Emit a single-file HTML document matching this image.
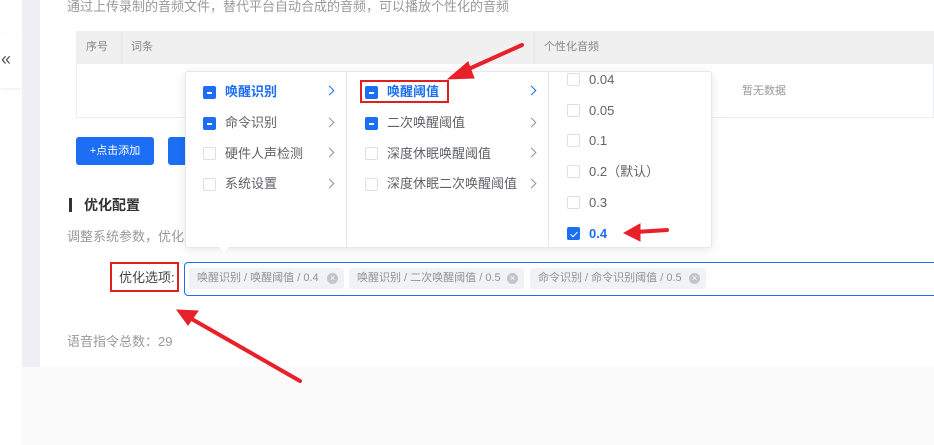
<!DOCTYPE html>
<html><head><meta charset="utf-8"><style>
*{margin:0;padding:0;box-sizing:border-box}
body{width:934px;height:445px;overflow:hidden;position:relative;background:#fff;font-family:"Liberation Sans","Noto Sans CJK SC",sans-serif;font-size:13px;color:#606266}
.a{position:absolute;white-space:nowrap;line-height:19px}
.cb{position:absolute;width:13px;height:13px;border:1px solid #dcdfe6;border-radius:2px;background:#fff}
.cb.m{background:#1c6ef5;border-color:#1c6ef5}
.cb.m:after{content:"";position:absolute;left:3px;top:5px;width:5px;height:1.5px;background:#fff}
.cb.c{background:#1c6ef5;border-color:#1c6ef5}
.cb.c:after{content:"";position:absolute;left:3.5px;top:1.5px;width:3px;height:6px;border-right:1.5px solid #fff;border-bottom:1.5px solid #fff;transform:rotate(45deg)}
.ar{position:absolute;width:7px;height:7px;border-right:1px solid #909399;border-top:1px solid #909399;transform:rotate(45deg)}
.tag{position:absolute;top:268px;height:21px;background:#f0f2f5;border-radius:3px;font-size:11px;color:#909399;line-height:21px;padding-left:8px}
.x{position:absolute;right:6px;top:5px;width:11px;height:11px;border-radius:50%;background:#c0c4cc;color:#fff;font-size:9px;line-height:11px;text-align:center}
</style></head><body>
<div class="a" style="left:0;top:0;width:22px;height:445px;background:#fff"></div>
<div class="a" style="left:0;top:33px;width:22px;height:55px;box-shadow:0 1px 3px rgba(0,0,0,.08);background:#fff"></div>
<div class="a" style="left:1px;top:50px;font-size:18px;color:#555">«</div>
<div class="a" style="left:22px;top:0;width:18px;height:367px;background:#eef0f5"></div>
<div class="a" style="left:22px;top:367px;width:912px;height:78px;background:#fafafa"></div>
<div class="a" style="left:67px;top:-3px;color:#999;font-size:13px">通过上传录制的音频文件，替代平台自动合成的音频，可以播放个性化的音频</div>
<div class="a" style="left:76px;top:31px;width:858px;height:87px;border:1px solid #ebeef5"></div>
<div class="a" style="left:76px;top:31px;width:858px;height:33px;background:#f0f0f0"></div>
<div class="a" style="left:121px;top:31px;width:1px;height:33px;background:#e4e4e4"></div>
<div class="a" style="left:534px;top:31px;width:1px;height:33px;background:#e4e4e4"></div>
<div class="a" style="left:86px;top:38px;font-size:11px;color:#888">序号</div>
<div class="a" style="left:131px;top:38px;font-size:11px;color:#888">词条</div>
<div class="a" style="left:544px;top:38px;font-size:11px;color:#888">个性化音频</div>
<div class="a" style="left:742px;top:82px;font-size:11px;color:#999">暂无数据</div>
<div class="a" style="left:76px;top:137px;width:78px;height:28px;background:#1c6ef5;border-radius:3px;color:#fff;font-size:11px;line-height:28px;text-align:center">+点击添加</div>
<div class="a" style="left:168px;top:137px;width:30px;height:28px;background:#1c6ef5;border-radius:3px"></div>
<div class="a" style="left:69px;top:198px;width:3px;height:14px;background:#333"></div>
<div class="a" style="left:84px;top:196px;font-size:14px;font-weight:bold;color:#333">优化配置</div>
<div class="a" style="left:67px;top:227px;color:#999">调整系统参数，优化系统</div>
<div class="a" style="left:110px;top:262px;width:69px;height:30px;border:2px solid #e02020"></div>
<div class="a" style="left:119px;top:268px;color:#444">优化选项:</div>
<div class="a" style="left:184px;top:262px;width:760px;height:34px;border:1px solid #1c6ef5;border-radius:4px"></div>
<div class="tag" style="left:189px;width:155px">唤醒识别 / 唤醒阈值 / 0.4<span class="x">×</span></div>
<div class="tag" style="left:349px;width:175px">唤醒识别 / 二次唤醒阈值 / 0.5<span class="x">×</span></div>
<div class="tag" style="left:530px;width:176px">命令识别 / 命令识别阈值 / 0.5<span class="x">×</span></div>
<div class="a" style="left:67px;top:332px;color:#999">语音指令总数：29</div>
<!-- dropdown -->
<div class="a" style="left:185px;top:71px;width:527px;height:177px;background:#fff;border:1px solid #e4e7ed;border-radius:3px;box-shadow:0 2px 10px rgba(0,0,0,.1)"></div>
<div class="a" style="left:219px;top:247px;width:0;height:0;border-left:5px solid transparent;border-right:5px solid transparent;border-top:6px solid #fff"></div>
<div class="a" style="left:346px;top:72px;width:1px;height:175px;background:#e4e7ed"></div>
<div class="a" style="left:548px;top:72px;width:1px;height:175px;background:#e4e7ed"></div>
<div class="cb m" style="left:203px;top:86px"></div><div class="a" style="left:225px;top:82px;color:#1c6ef5;font-weight:bold">唤醒识别</div><div class="ar" style="left:326px;top:87px;border-color:#1c6ef5"></div>
<div class="cb m" style="left:203px;top:117px"></div><div class="a" style="left:225px;top:113px">命令识别</div><div class="ar" style="left:326px;top:119px"></div>
<div class="cb" style="left:203px;top:147px"></div><div class="a" style="left:225px;top:144px">硬件人声检测</div><div class="ar" style="left:326px;top:149px"></div>
<div class="cb" style="left:203px;top:178px"></div><div class="a" style="left:225px;top:174px">系统设置</div><div class="ar" style="left:326px;top:180px"></div>
<div class="a" style="left:360px;top:80px;width:89px;height:23px;border:2px solid #e02020"></div>
<div class="cb m" style="left:365px;top:86px"></div><div class="a" style="left:387px;top:82px;color:#1c6ef5;font-weight:bold">唤醒阈值</div><div class="ar" style="left:528px;top:87px;border-color:#1c6ef5"></div>
<div class="cb m" style="left:365px;top:117px"></div><div class="a" style="left:387px;top:113px">二次唤醒阈值</div><div class="ar" style="left:528px;top:119px"></div>
<div class="cb" style="left:365px;top:147px"></div><div class="a" style="left:387px;top:144px">深度休眠唤醒阈值</div><div class="ar" style="left:528px;top:149px"></div>
<div class="cb" style="left:365px;top:178px"></div><div class="a" style="left:387px;top:174px">深度休眠二次唤醒阈值</div><div class="ar" style="left:528px;top:180px"></div>
<div class="cb" style="left:567px;top:73px"></div><div class="a" style="left:589px;top:70px">0.04</div>
<div class="cb" style="left:567px;top:104px"></div><div class="a" style="left:589px;top:101px">0.05</div>
<div class="cb" style="left:567px;top:134px"></div><div class="a" style="left:589px;top:131px">0.1</div>
<div class="cb" style="left:567px;top:165px"></div><div class="a" style="left:589px;top:162px">0.2（默认）</div>
<div class="cb" style="left:567px;top:196px"></div><div class="a" style="left:589px;top:193px">0.3</div>
<div class="cb c" style="left:567px;top:227px"></div><div class="a" style="left:589px;top:224px;color:#1c6ef5;font-weight:bold">0.4</div>
<!-- arrows -->
<svg class="a" style="left:0;top:0" width="934" height="445">
<g stroke="#e8202a" stroke-width="4" stroke-linecap="round" fill="#e8202a">
<line x1="522" y1="45" x2="462" y2="72"/>
<polygon points="448,79 468,62 474,78" stroke-width="1"/>
<line x1="667" y1="230" x2="636" y2="232"/>
<polygon points="624,233 640,224 640,241" stroke-width="1"/>
<line x1="300" y1="381" x2="190" y2="318"/>
<polygon points="177,310 198,311 188,325" stroke-width="1"/>
</g></svg>
</body></html>
